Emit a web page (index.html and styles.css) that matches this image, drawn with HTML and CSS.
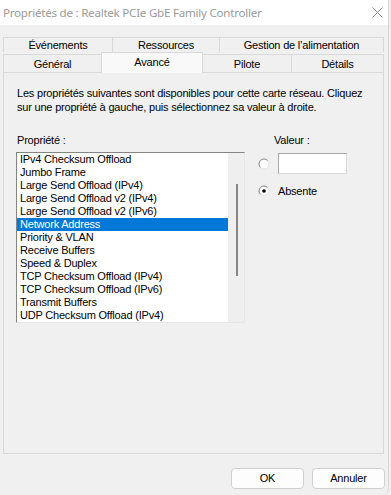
FILE: index.html
```html
<!DOCTYPE html>
<html lang="fr">
<head>
<meta charset="utf-8">
<title>Propriétés</title>
<link rel="stylesheet" href="styles.css">
</head>
<body>
<div class="window">
  <div class="titlebar">
    <span class="title">Propriétés de : Realtek PCIe GbE Family Controller</span>
    <svg class="close" width="11" height="11" viewBox="0 0 11 11"><path d="M0.5 0.5 L10.5 10.5 M10.5 0.5 L0.5 10.5" stroke="#8e8e8e" stroke-width="1" fill="none"/></svg>
  </div>
  <div class="content">
    <div class="tabs">
      <div class="tabrow back">
        <div class="tab w-evt">Événements</div>
        <div class="tab w-res">Ressources</div>
        <div class="tab w-ges last">Gestion de l’alimentation</div>
      </div>
      <div class="tabrow front">
        <div class="tab w-gen">Général</div>
        <div class="tab w-ava selected">Avancé</div>
        <div class="tab w-pil">Pilote</div>
        <div class="tab w-det last">Détails</div>
      </div>
    </div>
    <div class="panel">
      <p class="desc">Les propriétés suivantes sont disponibles pour cette carte réseau. Cliquez<br>sur une propriété à gauche, puis sélectionnez sa valeur à droite.</p>
      <div class="cols">
        <div class="propcol">
          <div class="label">Propriété :</div>
          <div class="listbox">
            <ul class="items">
              <li>IPv4 Checksum Offload</li>
              <li>Jumbo Frame</li>
              <li>Large Send Offload (IPv4)</li>
              <li>Large Send Offload v2 (IPv4)</li>
              <li>Large Send Offload v2 (IPv6)</li>
              <li class="sel">Network Address</li>
              <li>Priority &amp; VLAN</li>
              <li>Receive Buffers</li>
              <li>Speed &amp; Duplex</li>
              <li>TCP Checksum Offload (IPv4)</li>
              <li>TCP Checksum Offload (IPv6)</li>
              <li>Transmit Buffers</li>
              <li>UDP Checksum Offload (IPv4)</li>
            </ul>
            <div class="scrollbar"><div class="thumb"></div></div>
          </div>
        </div>
        <div class="valcol">
          <div class="label vlabel">Valeur :</div>
          <div class="vrow">
            <svg class="radio" width="12" height="12" viewBox="0 0 12 12"><circle cx="6" cy="6" r="5" fill="#fff" stroke="#e2e2e2"/><path d="M2.46 9.54 A5 5 0 0 1 9.54 2.46" fill="none" stroke="#8a8a8a"/></svg>
            <div class="textbox"></div>
          </div>
          <div class="vrow second">
            <svg class="radio" width="12" height="12" viewBox="0 0 12 12"><circle cx="6" cy="6" r="5" fill="#fff" stroke="#e2e2e2"/><path d="M2.46 9.54 A5 5 0 0 1 9.54 2.46" fill="none" stroke="#8a8a8a"/><circle cx="6" cy="6" r="1.8" fill="#000"/></svg>
            <span class="rlabel">Absente</span>
          </div>
        </div>
      </div>
    </div>
    <div class="buttons">
      <div class="btn">OK</div>
      <div class="btn">Annuler</div>
    </div>
  </div>
</div>
</body>
</html>
```

FILE: styles.css
```css
* { box-sizing: border-box; }
html, body { margin: 0; padding: 0; }
body {
  width: 391px;
  height: 495px;
  overflow: hidden;
  background: #f0f0f0;
  font-family: "Liberation Sans", Arial, sans-serif;
  font-size: 11px;
  letter-spacing: -0.2px;
  color: #000;
}
.window {
  width: 389px;
  height: 495px;
  background: #f0f0f0;
  border-right: 1px solid #d6d6d6;
  border-bottom-right-radius: 7px;
  overflow: hidden;
}
.titlebar {
  height: 25px;
  background: #fff;
  display: flex;
  align-items: center;
  justify-content: space-between;
  padding: 0 5px 0 3px;
}
.title {
  font-family: "Noto Sans", "Open Sans", sans-serif;
  font-size: 11.6px;
  letter-spacing: -0.25px;
  color: #9a9a9a;
}
.close { display: block; }
.content { padding: 12px 0 0 3px; }
.tabs { width: 381px; }
.tabrow { display: flex; align-items: flex-end; }
.tab {
  border: 1px solid #d9d9d9;
  border-bottom: none;
  border-right: none;
  text-align: center;
  background: #f0f0f0;
}
.tab.last { border-right: 1px solid #d9d9d9; }
.back .tab { height: 15px; line-height: 14px; }
.front .tab { height: 18px; line-height: 18px; }
.front .tab.selected {
  height: 21px;
  line-height: 19px;
  margin-bottom: -1px;
  margin-right: -1px;
  border-right: 1px solid #d9d9d9;
  background: #f9f9f9;
  position: relative;
  z-index: 1;
}
.w-evt { width: 109px; }
.w-res { width: 107px; }
.w-ges { width: 165px; }
.w-gen { width: 98px; }
.w-ava { width: 102px; }
.w-pil { width: 89px; }
.w-det { width: 93px; }

.panel {
  width: 381px;
  height: 382px;
  border: 1px solid #d9d9d9;
  background: #f0f0f0;
  padding: 13px 12px 0 12px;
}
.desc {
  margin: 0 0 0 1px;
  line-height: 14px;
}
.cols {
  display: flex;
  margin-top: 19px;
}
.label { line-height: 14px; padding-left: 1px; }
.propcol { width: 229px; }
.listbox {
  margin-top: 5px;
  width: 229px;
  height: 171px;
  border: 1px solid;
  border-color: #858585 #e6e6e6 #e6e6e6 #858585;
  background: #fff;
  display: flex;
}
.items {
  list-style: none;
  margin: 0;
  padding: 0;
  flex: 1;
}
.items li {
  height: 13px;
  line-height: 13px;
  padding-left: 3px;
  white-space: nowrap;
}
.items li.sel { background: #0078d7; color: #fff; }
.scrollbar {
  width: 16px;
  background: #efefef;
  padding-top: 31px;
  display: flex;
  justify-content: center;
}
.thumb {
  width: 2px;
  height: 92px;
  background: #858585;
  margin-left: 1px;
}
.valcol { margin-left: 13px; }
.vlabel { padding-left: 16px; }
.vrow {
  display: flex;
  align-items: center;
  gap: 8px;
  margin-top: 6px;
}
.vrow.second { margin-top: 10px; }
.radio { display: block; flex: none; }
.textbox {
  width: 69px;
  height: 21px;
  background: #fff;
  border: 1px solid #b4b4b4;
  border-color: #a8a8a8 #dadada #dadada #a8a8a8;
}
.rlabel { line-height: 14px; }
.buttons {
  display: flex;
  justify-content: flex-end;
  gap: 8px;
  margin-top: 14px;
  padding-right: 3px;
}
.btn {
  width: 73px;
  height: 21px;
  line-height: 19px;
  text-align: center;
  background: #fdfdfd;
  border: 1px solid #d0d0d0;
  border-radius: 4px;
}
```
